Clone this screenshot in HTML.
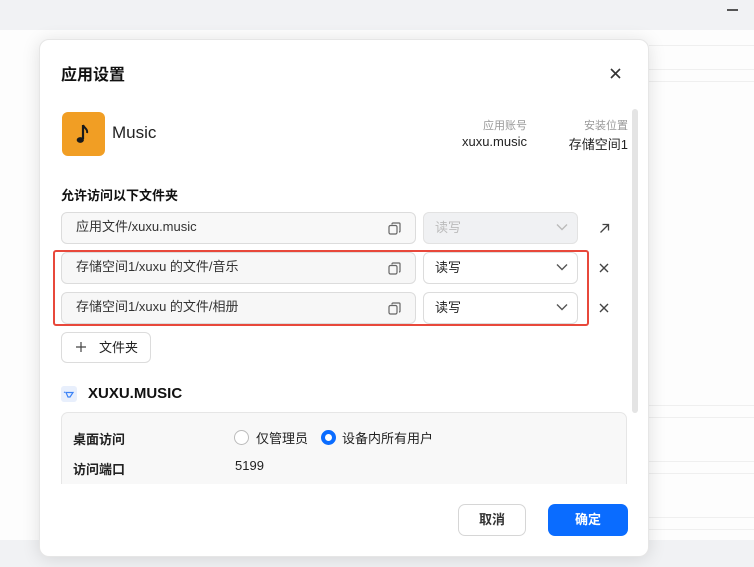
<!DOCTYPE html>
<html><head><meta charset="utf-8"><style>
*{box-sizing:border-box;margin:0;padding:0}
body{width:754px;height:567px;overflow:hidden;background:#fdfdfd;font-family:"Liberation Sans","Noto Sans CJK SC",sans-serif;color:#222;position:relative}
.top{position:absolute;left:0;top:0;width:754px;height:30px;background:#f1f2f4}
.bot{position:absolute;left:0;top:540px;width:754px;height:27px;background:#f1f2f4}
.line{position:absolute;left:649px;width:105px;height:1px;background:#efefef}
.modal{position:absolute;left:39px;top:39px;width:610px;height:518px;background:#fff;border-radius:10px;box-shadow:0 2px 18px rgba(0,0,0,.12);border:1px solid #e6e6e6}
.a{position:absolute}
.inp{position:absolute;height:32px;border:1px solid #dcdcdc;border-radius:6px;background:#f7f7f7;font-size:13px;line-height:28px;padding-left:14px;color:#333}
.sel{position:absolute;height:32px;border:1px solid #dcdcdc;border-radius:6px;background:#fff;font-size:13px;line-height:30px;padding-left:11px;color:#222}
.chev{position:absolute;right:9px;top:10px}
.copy{position:absolute;right:14px;top:9px}
</style></head><body>
<div class="top"></div>
<div class="a" style="left:727px;top:9px;width:11px;height:1.5px;background:#555"></div>
<div class="line" style="top:45px"></div><div class="line" style="top:69px"></div><div class="line" style="top:81px"></div>
<div class="line" style="top:405px"></div><div class="line" style="top:417px"></div><div class="line" style="top:461px"></div><div class="line" style="top:473px"></div><div class="line" style="top:517px"></div><div class="line" style="top:529px"></div>
<div class="bot"></div>
<div class="modal">
 <div class="a" style="left:21px;top:21px;font-size:16px;font-weight:bold;color:#111">应用设置</div>
 <svg class="a" style="left:570px;top:28px" width="11" height="11" viewBox="0 0 11 11"><path d="M1 1L10 10M10 1L1 10" stroke="#333" stroke-width="1.6"/></svg>
 <div class="a" style="left:592px;top:69px;width:6px;height:304px;background:#e4e4e4;border-radius:3px"></div>
 <div class="a" style="left:22px;top:72px;width:43px;height:44px;background:#f19e24;border-radius:6px">
  <svg width="43" height="44" viewBox="0 0 43 44"><path d="M21 13v14" stroke="#1a1a1a" stroke-width="2.2"/><ellipse cx="18.3" cy="28" rx="3.6" ry="2.9" fill="#1a1a1a"/><path d="M21 13c1 3 5 4 4 8" stroke="#1a1a1a" stroke-width="2" fill="none"/></svg>
 </div>
 <div class="a" style="left:72px;top:83px;font-size:17px;color:#222">Music</div>
 <div class="a" style="left:400px;top:77px;width:87px;text-align:right;font-size:11px;color:#999">应用账号</div>
 <div class="a" style="left:400px;top:94px;width:87px;text-align:right;font-size:13px;color:#222">xuxu.music</div>
 <div class="a" style="left:500px;top:77px;width:88px;text-align:right;font-size:11px;color:#999">安装位置</div>
 <div class="a" style="left:500px;top:94px;width:88px;text-align:right;font-size:13px;color:#222">存储空间1</div>
 <div class="a" style="left:21px;top:145px;font-size:13px;font-weight:bold;color:#111">允许访问以下文件夹</div>

 <div class="inp" style="left:21px;top:172px;width:355px;background:#f8f8f8">应用文件/xuxu.music<svg class="copy" width="13" height="13" viewBox="0 0 13 13"><rect x="1" y="3.5" width="8" height="8.5" rx="1.5" fill="none" stroke="#666" stroke-width="1.2"/><path d="M4 2.5V2a1 1 0 0 1 1-1h6a1 1 0 0 1 1 1v7a1 1 0 0 1-1 1" fill="none" stroke="#666" stroke-width="1.2"/></svg></div>
 <div class="sel" style="left:383px;top:172px;width:155px;background:#f0f1f3;color:#bbb;border-color:#e2e2e2">读写<svg class="chev" width="12" height="8" viewBox="0 0 12 8"><path d="M1 1.5l5 5 5-5" fill="none" stroke="#bbb" stroke-width="1.4"/></svg></div>
 <svg class="a" style="left:559px;top:183px" width="11" height="11" viewBox="0 0 11 11"><path d="M1.5 9.5L9.5 1.5M3.5 1.5h6v6" fill="none" stroke="#444" stroke-width="1.3"/></svg>

 <div class="a" style="left:13px;top:210px;width:536px;height:76px;border:2.5px solid #e8483b;border-radius:3px"></div>
 <div class="inp" style="left:21px;top:212px;width:355px">存储空间1/xuxu 的文件/音乐<svg class="copy" width="13" height="13" viewBox="0 0 13 13"><rect x="1" y="3.5" width="8" height="8.5" rx="1.5" fill="none" stroke="#666" stroke-width="1.2"/><path d="M4 2.5V2a1 1 0 0 1 1-1h6a1 1 0 0 1 1 1v7a1 1 0 0 1-1 1" fill="none" stroke="#666" stroke-width="1.2"/></svg></div>
 <div class="sel" style="left:383px;top:212px;width:155px">读写<svg class="chev" width="12" height="8" viewBox="0 0 12 8"><path d="M1 1.5l5 5 5-5" fill="none" stroke="#555" stroke-width="1.4"/></svg></div>
 <svg class="a" style="left:559px;top:223px" width="10" height="10" viewBox="0 0 10 10"><path d="M1 1L9 9M9 1L1 9" stroke="#444" stroke-width="1.4"/></svg>
 <div class="inp" style="left:21px;top:252px;width:355px">存储空间1/xuxu 的文件/相册<svg class="copy" width="13" height="13" viewBox="0 0 13 13"><rect x="1" y="3.5" width="8" height="8.5" rx="1.5" fill="none" stroke="#666" stroke-width="1.2"/><path d="M4 2.5V2a1 1 0 0 1 1-1h6a1 1 0 0 1 1 1v7a1 1 0 0 1-1 1" fill="none" stroke="#666" stroke-width="1.2"/></svg></div>
 <div class="sel" style="left:383px;top:252px;width:155px">读写<svg class="chev" width="12" height="8" viewBox="0 0 12 8"><path d="M1 1.5l5 5 5-5" fill="none" stroke="#555" stroke-width="1.4"/></svg></div>
 <svg class="a" style="left:559px;top:263px" width="10" height="10" viewBox="0 0 10 10"><path d="M1 1L9 9M9 1L1 9" stroke="#444" stroke-width="1.4"/></svg>

 <div class="a" style="left:21px;top:292px;width:90px;height:31px;border:1px solid #dcdcdc;border-radius:6px;font-size:13px;line-height:29px;padding-left:37px;color:#222">文件夹
  <svg class="a" style="left:14px;top:9px" width="10" height="10" viewBox="0 0 10 10"><path d="M5 0v10M0 5h10" stroke="#444" stroke-width="1.2"/></svg></div>

 <div class="a" style="left:21px;top:346px;width:16px;height:16px;background:#e8effc;border-radius:3px">
  <svg width="16" height="16" viewBox="0 0 16 16"><path d="M3 6l1 0.5M5 6.5h7l-3 4.5h-2z" fill="none" stroke="#3b82f6" stroke-width="1.2"/></svg></div>
 <div class="a" style="left:48px;top:345px;font-size:15px;font-weight:bold;color:#111">XUXU.MUSIC</div>

 <div class="a" style="left:21px;top:372px;width:566px;height:72px;background:#f8f8f8;border:1px solid #e6e6e6;border-bottom:none;border-radius:7px 7px 0 0"></div>
 <div class="a" style="left:33px;top:389px;font-size:13px;font-weight:bold;color:#222">桌面访问</div>
 <div class="a" style="left:194px;top:390px;width:15px;height:15px;border:1px solid #bbb;border-radius:50%;background:#fff"></div>
 <div class="a" style="left:216px;top:388px;font-size:13px;color:#222">仅管理员</div>
 <div class="a" style="left:281px;top:390px;width:15px;height:15px;border:4.5px solid #0a6cff;border-radius:50%;background:#fff"></div>
 <div class="a" style="left:302px;top:388px;font-size:13px;color:#222">设备内所有用户</div>
 <div class="a" style="left:33px;top:419px;font-size:13px;font-weight:bold;color:#222">访问端口</div>
 <div class="a" style="left:195px;top:418px;font-size:13px;color:#222">5199</div>

 <div class="a" style="left:418px;top:464px;width:68px;height:32px;border:1px solid #d6d6d6;border-radius:7px;text-align:center;line-height:30px;font-size:13px;font-weight:bold;color:#333;background:#fff">取消</div>
 <div class="a" style="left:508px;top:464px;width:80px;height:32px;background:#0a6cff;border-radius:7px;text-align:center;line-height:32px;font-size:13px;font-weight:bold;color:#fff">确定</div>
</div>
</body></html>
